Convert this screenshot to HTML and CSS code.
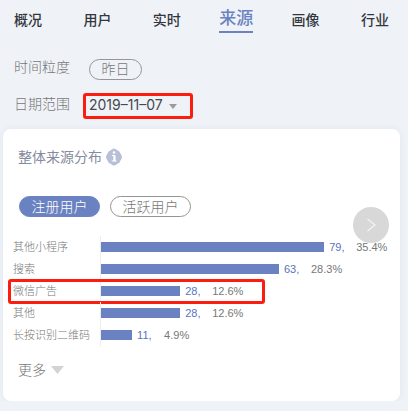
FILE: index.html
```
<!DOCTYPE html>
<html lang="zh-CN">
<head>
  <meta charset="utf-8">
  <meta name="viewport" content="width=device-width, initial-scale=1">
  <title>来源</title>
  <link rel="stylesheet" href="styles.css">
</head>
<body>

<nav class="tabs">
  <a href="#">概况</a>
  <a href="#">用户</a>
  <a href="#">实时</a>
  <a href="#" class="active">来源</a>
  <a href="#">画像</a>
  <a href="#">行业</a>
</nav>

<div class="filters">
  <div class="filter">
    <span class="filter-name">时间粒度</span>
    <button class="pill pill-small">昨日</button>
  </div>
  <div class="filter">
    <label class="filter-name" for="date">日期范围</label>
    <div class="date-box">
      <select id="date">
        <option>2019–11–07</option>
      </select>
      <svg class="caret" width="8" height="5" viewBox="0 0 8 5"><path d="M0 0h8L4 5z" fill="#999b9e"/></svg>
    </div>
  </div>
</div>

<section class="card">
  <h2 class="card-title">
    整体来源分布
    <svg width="16" height="18" viewBox="0 0 16 18">
      <path d="M8 0.5Q9.5 0.5 11 2Q14 3 14.5 5.500Q16 7.500 16 9Q16 10.500 14.500 12.500Q14 15 11 16Q9.500 17.500 8 17.500Q6.500 17.500 5 16Q2 15 1.500 12.500Q0 10.500 0 9Q0 7.500 1.500 5.500Q2 3 5 2Q6.500 0.500 8 0.500z" fill="#b7c0d6"/>
      <circle cx="8" cy="4.500" r="1.300" fill="#fff"/>
      <path d="M6 7.500h3v5.500h1.200M5.800 13h4.400" fill="none" stroke="#fff" stroke-width="1"/>
      <path d="M8.200 7v6" stroke="#fff" stroke-width="1.800"/>
    </svg>
  </h2>

  <div class="pills">
    <button class="pill pill-on">注册用户</button>
    <button class="pill">活跃用户</button>
  </div>

  <button class="next" aria-label="下一页">
    <svg width="10" height="14" viewBox="0 0 10 14"><path d="M1.500 1L9 7L1.500 13" fill="none" stroke="#f4f4f4" stroke-width="1.200"/></svg>
  </button>

  <ul class="chart">
    <li class="row">
      <span class="name">其他小程序</span>
      <div class="track"><div class="bar" style="width: 77.5%"></div><span class="count">79,</span><span>35.4%</span></div>
    </li>
    <li class="row">
      <span class="name">搜索</span>
      <div class="track"><div class="bar" style="width: 61.8%"></div><span class="count">63,</span><span>28.3%</span></div>
    </li>
    <li class="row marked">
      <span class="name">微信广告</span>
      <div class="track"><div class="bar" style="width: 27.5%"></div><span class="count">28,</span><span>12.6%</span></div>
    </li>
    <li class="row">
      <span class="name">其他</span>
      <div class="track"><div class="bar" style="width: 27.5%"></div><span class="count">28,</span><span>12.6%</span></div>
    </li>
    <li class="row">
      <span class="name">长按识别二维码</span>
      <div class="track"><div class="bar" style="width: 10.8%"></div><span class="count">11,</span><span>4.9%</span></div>
    </li>
  </ul>

  <button class="more">
    更多
    <svg width="13" height="8" viewBox="0 0 13 8"><path d="M0 0h13L6.500 8z" fill="#d3d3d3"/></svg>
  </button>
</section>

</body>
</html>
```
FILE: styles.css
```
* {
  box-sizing: border-box;
}
body {
  margin: 0;
  background-color: #eff3f7;
  color: #777;
  font-family: "Liberation Sans", "Noto Sans CJK SC", sans-serif;
  font-size: 14px;
  font-weight: 300;
  line-height: 20px;
}
button,
select {
  margin: 0;
  padding: 0;
  border: 0;
  background: none;
  color: inherit;
  font: inherit;
}
.tabs {
  display: flex;
  justify-content: space-between;
  align-items: flex-start;
  padding: 6px 16px 0 11px;
}
.tabs a {
  width: 34px;
  color: #33373d;
  font-weight: 500;
  line-height: 28px;
  text-align: center;
  text-decoration: none;
  white-space: nowrap;
}
.tabs .active {
  border-bottom: 2px solid #6a82c1;
  color: #6a82c1;
  font-size: 17px;
  line-height: 25px;
}
.filters {
  padding: 22px 14px 0;
}
.filter {
  display: flex;
  align-items: center;
  height: 26px;
  margin-bottom: 11px;
}
.filter-name {
  width: 69px;
  padding-bottom: 4px;
}
.pill {
  width: 81px;
  height: 21px;
  border: 1px solid #959595;
  border-radius: 11px;
  line-height: 18px;
}
.pill-small {
  width: 53px;
  margin-left: 6px;
}
.pill-on {
  border-color: #6a82c1;
  background-color: #6a82c1;
  color: #fff;
}
.date-box {
  display: flex;
  align-items: center;
  position: relative;
  width: 110px;
  height: 26px;
  border: 3px solid #fd1d0f;
  border-radius: 3px;
}
.date-box select {
  width: 100%;
  padding: 0 0 2px 3px;
  appearance: none;
  color: #45484d;
  font-family: Inter, sans-serif;
  font-weight: 400;
}
.caret {
  position: absolute;
  right: 13px;
  pointer-events: none;
}
.card {
  position: relative;
  margin: -1px 8px 0 3px;
  padding: 18px 11px 21px 10px;
  border-radius: 8px;
  background-color: #fff;
  box-shadow: 0 0 6px #dfe5f2;
}
.card-title {
  display: flex;
  align-items: center;
  gap: 4px;
  margin: 0 0 29px 5px;
  color: #858ba0;
  font-size: 14px;
  font-weight: 400;
}
.pills {
  display: flex;
  gap: 10px;
  margin: 0 0 19px 6px;
}
.next {
  display: flex;
  align-items: center;
  justify-content: center;
  position: absolute;
  top: 78px;
  right: 11px;
  width: 36px;
  height: 36px;
  border-radius: 50%;
  background-color: #d8d8d8;
}
.chart {
  position: relative;
  margin: 0 0 14px;
  padding: 0;
  list-style: none;
  font-size: 11px;
}
.row {
  display: flex;
  position: relative;
  line-height: 22px;
}
.name {
  width: 87px;
  white-space: nowrap;
}
.track {
  display: flex;
  flex: 1;
  align-items: center;
  border-left: 1px solid #ebedf2;
  white-space: nowrap;
}
.bar {
  flex: none;
  height: 10px;
  background-color: #6a82c1;
}
.count {
  width: 27px;
  margin-left: 5px;
  color: #5873bd;
}
/* outline round the ads row */
.marked::after {
  content: "";
  box-sizing: border-box;
  position: absolute;
  top: -1px;
  left: -5px;
  width: 257px;
  height: 25px;
  border: 3px solid #fd1d0f;
  border-radius: 3px;
}
.more {
  display: flex;
  align-items: center;
  gap: 5px;
  margin-left: 5px;
}
```
